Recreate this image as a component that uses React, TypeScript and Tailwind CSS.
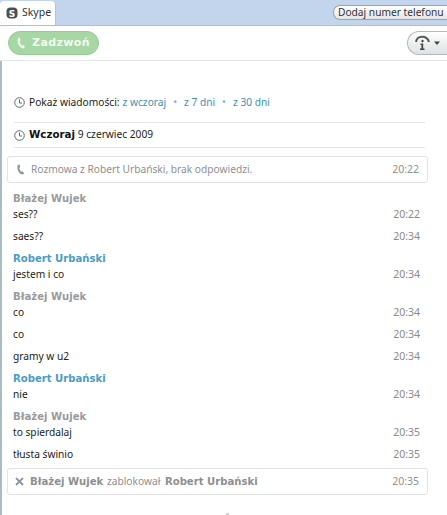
import React from "react";

const font = { fontFamily: '"Noto Sans", sans-serif' };
const bold = { fontFamily: '"DejaVu Sans", sans-serif' };

function Clock() {
  return (
    <svg width="11" height="11" viewBox="0 0 11 11" className="shrink-0" fill="none" stroke="#5f6b70" strokeWidth="1">
      <circle cx="5.5" cy="5.5" r="4.8" />
      <path d="M5.5 2.5V6H8" />
    </svg>
  );
}

function Phone({ color, size }: { color: string; size: number }) {
  return (
    <svg width={size} height={size} viewBox="0 0 12 12" className="shrink-0">
      <path d="M3 1 L5 .6 L5.6 3.4 L4.6 4.4 C4.8 6 5.8 7.6 7 8.4 L8.2 7.8 L10 10 L8.6 11.4 C5 11.4 1.2 6 3 1Z" fill={color} />
    </svg>
  );
}

function Name({ children, blue }: { children: React.ReactNode; blue?: boolean }) {
  return (
    <div className={`h-4 leading-[18px] text-[10.1px] font-bold ${blue ? "text-[#4d9cc4]" : "text-[#9a9a9a]"}`} style={bold}>
      {children}
    </div>
  );
}

function Msg({ text, time }: { text: string; time: string }) {
  return (
    <div className="h-4 mb-[6px] flex justify-between items-center leading-4 text-[10.2px] text-[#222222]">
      <span>{text}</span>
      <span className="text-[#8a8a8a] text-[10.5px]">{time}</span>
    </div>
  );
}

export default function App() {
  return (
    <div className="w-[447px] h-[515px] overflow-hidden bg-white flex flex-col text-[10.2px] text-[#222222]" style={font}>
      <div className="h-[26px] bg-[#c3d5ec] border-b border-[#aebfd4] flex justify-between items-end shrink-0">
        <div className="w-[56px] h-[24px] bg-white rounded-t-[4px] border-r border-[#b4c3d6] flex items-center gap-[4px] pl-[6px]">
          <svg width="12" height="12" viewBox="0 0 12 12" className="shrink-0">
            <rect x="0.5" y="0.5" width="11" height="11" rx="4" fill="#4a4f55" />
            <text x="6" y="9.5" textAnchor="middle" fontSize="9" fontWeight="700" fill="#ffffff" fontFamily="DejaVu Sans">S</text>
          </svg>
          <span className="text-[#333333] text-[10.5px]">Skype</span>
        </div>
        <div className="mb-[5px] h-[15px] w-[114px] rounded-l-[7px] border border-r-0 border-[#9aa3ab] bg-gradient-to-b from-white to-[#e4e6e8] text-[#333333] flex items-center pl-[4px] leading-none whitespace-nowrap overflow-hidden">
          Dodaj numer telefonu
        </div>
      </div>

      <div className="h-[35px] border-b border-[#e3e6e6] flex items-center justify-between shrink-0 pl-[8px]">
        <div className="h-[24px] w-[91px] rounded-[12px] bg-[#a6d7a4] border border-[#98cb98] flex items-center gap-[5px] pl-[6px] font-bold">
          <Phone color="#eaf6e8" size={12} />
          <span style={bold} className="text-[#f2faf0] text-[11px] tracking-[0.4px] whitespace-nowrap">Zadzwoń</span>
        </div>
        <div className="h-[24px] w-[40px] rounded-l-[12px] border border-r-0 border-[#b4b8b8] bg-gradient-to-b from-white to-[#dfe2e2] flex items-center pl-[6px]">
          <svg width="32" height="18" viewBox="0 0 32 18" fill="none" className="shrink-0">
            <path d="M2 8 C3 1 13 1 15 8" stroke="#555b5c" strokeWidth="2" />
            <circle cx="8.5" cy="7" r="1.2" fill="#444" />
            <path d="M6.5 9.5H9.2V14.5H10.5V16H6V14.5H7.4V11H6.5Z" fill="#444" />
            <path d="M20 7.5h6l-3 3.5z" fill="#444444" />
          </svg>
        </div>
      </div>

      <div className="flex-1 border-l-2 border-[#a9bdc0] relative pl-[5px] pr-[19px]">
        <div className="ml-[7px] mr-[3px] mt-[26px] h-[36px] pb-[4px] flex items-center gap-[3px] border-b border-[#e4e4e4] whitespace-nowrap">
          <Clock />
          <span className="ml-[1px]">Pokaż wiadomości:</span>
          <span className="text-[#3f8fb5]">z wczoraj</span>
          <span className="text-[#7fb0c4] mx-[4px]">•</span>
          <span className="text-[#3f8fb5]">z 7 dni</span>
          <span className="text-[#7fb0c4] mx-[4px]">•</span>
          <span className="text-[#3f8fb5]">z 30 dni</span>
        </div>
        <div className="ml-[7px] mr-[3px] h-[25px] flex items-center gap-[4px] border-b border-[#e4e4e4]">
          <Clock />
          <span><b className="text-[10.3px] text-[#111111]" style={bold}>Wczoraj</b> 9 czerwiec 2009</span>
        </div>

        <div className="mt-[8px] h-[27px] border border-[#e2e2e2] rounded-[3px] flex items-center justify-between pl-[7px] pr-[8px] text-[#8f8f8f]">
          <div className="flex items-center gap-[5px]">
            <Phone color="#8f979a" size={11} />
            <span>Rozmowa z Robert Urbański, brak odpowiedzi.</span>
          </div>
          <span className="text-[10.5px]">20:22</span>
        </div>

        <div className="mt-[7px] pl-[6px] pr-[8px]">
          <Name>Błażej Wujek</Name>
          <Msg text="ses??" time="20:22" />
          <Msg text="saes??" time="20:34" />
          <Name blue>Robert Urbański</Name>
          <Msg text="jestem i co" time="20:34" />
          <Name>Błażej Wujek</Name>
          <Msg text="co" time="20:34" />
          <Msg text="co" time="20:34" />
          <Msg text="gramy w u2" time="20:34" />
          <Name blue>Robert Urbański</Name>
          <Msg text="nie" time="20:34" />
          <Name>Błażej Wujek</Name>
          <Msg text="to spierdalaj" time="20:35" />
          <Msg text="tłusta świnio" time="20:35" />
        </div>

        <div className="mt-[4px] h-[27px] border border-[#e2e2e2] rounded-[3px] flex items-center justify-between pl-[7px] pr-[8px] text-[#8f8f8f]">
          <div className="flex items-center gap-[6px]">
            <svg width="9" height="9" viewBox="0 0 9 9" className="shrink-0" stroke="#8f979a" strokeWidth="1.8">
              <path d="M1 1L8 8M8 1L1 8" />
            </svg>
            <span>
              <b className="text-[10.1px]" style={bold}>Błażej Wujek</b> <span className="mx-[1px]">zablokował</span> <b className="text-[10.1px] ml-[1px]" style={bold}>Robert Urbański</b>
            </span>
          </div>
          <span className="text-[10.5px]">20:35</span>
        </div>
        <div className="absolute left-[224px] bottom-0 w-[3px] h-[2px] bg-[#cfd4da]" />
      </div>
    </div>
  );
}
